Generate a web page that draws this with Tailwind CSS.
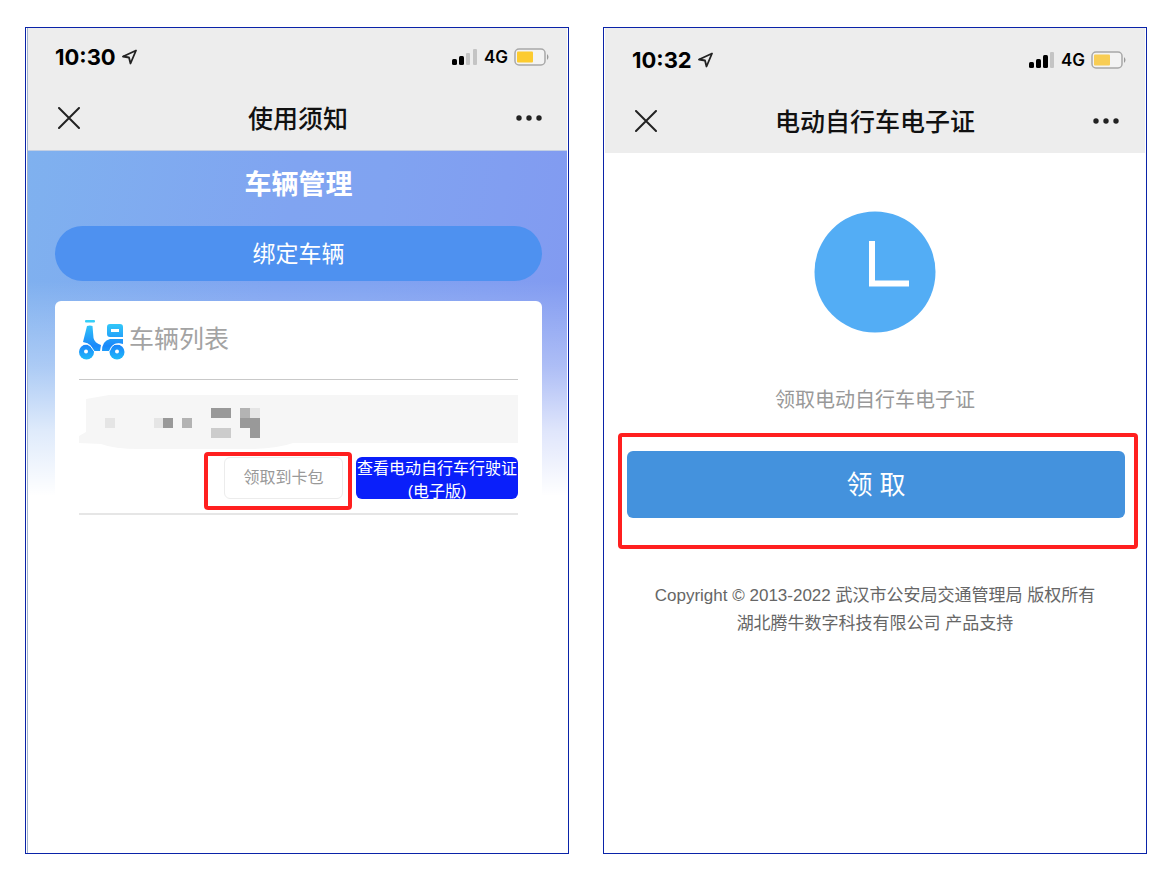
<!DOCTYPE html>
<html lang="zh-CN">
<head>
    <meta charset="UTF-8">
    <meta name="viewport" content="width=device-width, initial-scale=1.0">
    <title>电动自行车电子证</title>
    <script src="https://cdn.jsdelivr.net/npm/@tailwindcss/browser@4"></script>
</head>
<body class="min-h-screen bg-white font-['Liberation_Sans','Noto_Sans_CJK_SC',sans-serif]">
    <main class="min-h-screen grid grid-cols-2 gap-[34px] px-[25px] pt-[27px] pb-9">

        <!-- Vehicle management -->
        <section class="border border-[#0a23a8] pl-px pr-px">
            <div class="h-full border-l border-[#a3b3cc]">
                <header class="bg-[#ededed] border-b border-[#c3cfe3]">
                    <div class="h-[58px] pl-[27px] pr-[17px] flex items-center justify-between font-['Inter',sans-serif] text-black">
                        <div class="flex items-center gap-[6px]">
                            <span class="text-[22px] font-bold">10:30</span>
                            <svg class="w-4 h-4" viewBox="0 0 16 16" fill="none" stroke="#222" stroke-width="1.8" stroke-linejoin="round">
                                <path d="M14 1.5L1 7.5L7 8.5L8.500 14.5Z"></path>
                            </svg>
                        </div>
                        <div class="flex items-center gap-[6px]">
                            <svg class="w-[26px] h-4" viewBox="0 0 26 16">
                                <rect x="0" y="10" width="5" height="6" rx="1.5" fill="#000"></rect>
                                <rect x="7" y="7" width="5" height="9" rx="1.5" fill="#000"></rect>
                                <rect x="14" y="4" width="4" height="12" rx="1" fill="#c4c4c4"></rect>
                                <rect x="21" y="0" width="4" height="16" rx="1" fill="#c4c4c4"></rect>
                            </svg>
                            <span class="pt-[2px] text-[17px] font-semibold">4G</span>
                            <svg class="w-9 h-[18px]" viewBox="0 0 36 18">
                                <rect x="1" y="1" width="30" height="16" rx="4" fill="#f3f3f3" stroke="#a8a8a8" stroke-width="1.5"></rect>
                                <rect x="3" y="3.500" width="16" height="11" rx="1" fill="#fccb2f"></rect>
                                <path d="M33 6Q36 9 33 12Z" fill="#999"></path>
                            </svg>
                        </div>
                    </div>
                    <div class="h-16 pl-[30px] pr-[17px] grid grid-cols-[30px_1fr_42px] items-center text-[#111]">
                        <button type="button" class="text-left" aria-label="关闭">
                            <svg class="w-[22px] h-[22px]" viewBox="0 0 22 22" fill="none" stroke="#222" stroke-width="2" stroke-linecap="round">
                                <path d="M1 1L21 21M21 1L1 21"></path>
                            </svg>
                        </button>
                        <h1 class="pt-1 text-center text-[25px] font-medium">使用须知</h1>
                        <button type="button" class="flex justify-center" aria-label="更多">
                            <svg class="w-[26px] h-[6px]" viewBox="0 0 26 6" fill="#222">
                                <circle cx="3" cy="3" r="2.700"></circle>
                                <circle cx="13" cy="3" r="2.700"></circle>
                                <circle cx="23" cy="3" r="2.700"></circle>
                            </svg>
                        </button>
                    </div>
                </header>

                <div class="pt-4 pl-[27px] pr-[25px] bg-[linear-gradient(to_bottom,#ffffff00_130px,#ffffff59_215px,#ffffffbf_280px,#ffffff_345px),linear-gradient(100deg,#7fb1ef_0%,#80a4f1_45%,#80a3f1_60%,#8299f1_100%)]">
                    <h2 class="text-center text-[27px] leading-9 font-bold text-white">车辆管理</h2>
                    <button type="button" class="mt-[23px] w-full h-[55px] rounded-full bg-[#4e91f0] pt-[2px] text-[23px] text-white">绑定车辆</button>

                    <div class="mt-5 px-6 pt-4 bg-white rounded-md">
                        <div class="h-[63px] pb-4 flex items-center gap-1 border-b border-[#c9c9c9]">
                            <svg class="w-[46px] h-10" viewBox="0 0 46 40">
                                <defs>
                                    <linearGradient id="scooter" gradientUnits="userSpaceOnUse" x1="0" y1="0" x2="0" y2="40">
                                        <stop offset="0" stop-color="#36d3f8"></stop>
                                        <stop offset="0.650" stop-color="#1b88fa"></stop>
                                        <stop offset="1" stop-color="#20bdf9"></stop>
                                    </linearGradient>
                                </defs>
                                <g fill="url(#scooter)">
                                    <rect x="6" y="0" width="10" height="2.500" rx="1"></rect>
                                    <path d="M8 6Q11 5 13.500 6L14.500 18Q15.500 23 22 25L21 31H14Q14 24 4 22Z"></path>
                                    <path fill-rule="evenodd" d="M31 4H41Q44 4 44 7V17H31Q28 17 28 14V7Q28 4 31 4ZM32 9V12H40V9Z"></path>
                                    <path d="M31 19H44V24Q34 21 31 31H23Q23 21 31 19Z"></path>
                                    <circle cx="7.500" cy="32" r="7.500"></circle>
                                    <circle cx="38" cy="32" r="7.500"></circle>
                                </g>
                                <path d="M0 25.500Q9 20 15 31M30.500 31Q34 20 45 26" fill="none" stroke="#fff" stroke-width="1"></path>
                                <circle cx="7" cy="31.500" r="2" fill="#fff"></circle>
                                <circle cx="38" cy="31.500" r="2" fill="#fff"></circle>
                            </svg>
                            <h3 class="text-[25px] text-[#a3a3a3]">车辆列表</h3>
                        </div>

                        <!-- Masked plate number -->
                        <svg class="block w-full h-[54px] mt-[15px]" viewBox="0 0 439 54" preserveAspectRatio="xMinYMin slice" role="img" aria-label="车牌号">
                            <path d="M7 4L30 0H439V48H214Q200 53 175 54H60Q35 54 22 49L0 48V41L7 37Z" fill="#f6f6f6"></path>
                            <path d="M26 23h10v10h-10zM75 23h10v10h-10zM171 13h10v10h-10z" fill="#e5e5e5"></path>
                            <path d="M84 23h10v10h-10zM132 13h20v10h-20zM161 23h20v20h-10v-10h-10z" fill="#999"></path>
                            <path d="M103 23h10v10h-10zM161 13h10v10h-10z" fill="#b3b3b3"></path>
                            <path d="M132 33h20v10h-20z" fill="#ccc"></path>
                        </svg>

                        <div class="mt-[3px] pb-[3px] flex items-start justify-end gap-1 border-b-2 border-[#e6e6e6]">
                            <div class="h-[58px] border-4 border-[#ff1f1f] rounded-sm pt-px pl-4 pr-[5px]">
                                <button type="button" class="block w-[119px] h-[42px] rounded-md border border-[#ececec] text-[16px] text-[#999]">领取到卡包</button>
                            </div>
                            <button type="button" class="mt-[5px] w-[162px] h-[42px] rounded-md overflow-hidden flex items-start justify-center whitespace-nowrap bg-[#0a1ffa] text-[16px] leading-[23px] text-white">查看电动自行车行驶证<br>(电子版)</button>
                        </div>
                    </div>
                </div>
            </div>
        </section>

        <!-- Electronic certificate -->
        <section class="border border-[#0a23a8] pl-px pr-px">
            <header class="pt-[3px] bg-[#ededed]">
                <div class="h-[58px] pl-[27px] pr-[18px] flex items-center justify-between font-['Inter',sans-serif] text-black">
                    <div class="flex items-center gap-[6px]">
                        <span class="text-[22px] font-bold">10:32</span>
                        <svg class="w-4 h-4" viewBox="0 0 16 16" fill="none" stroke="#222" stroke-width="1.8" stroke-linejoin="round">
                            <path d="M14 1.5L1 7.5L7 8.5L8.500 14.5Z"></path>
                        </svg>
                    </div>
                    <div class="flex items-center gap-[6px]">
                        <svg class="w-[26px] h-4" viewBox="0 0 26 16">
                            <rect x="0" y="10" width="5" height="6" rx="1.5" fill="#000"></rect>
                            <rect x="7" y="7" width="5" height="9" rx="1.5" fill="#000"></rect>
                            <rect x="14" y="3" width="5" height="13" rx="1.5" fill="#000"></rect>
                            <rect x="21" y="0" width="4" height="16" rx="1" fill="#c4c4c4"></rect>
                        </svg>
                        <span class="pt-[2px] text-[17px] font-semibold">4G</span>
                        <svg class="w-9 h-[18px]" viewBox="0 0 36 18">
                            <rect x="1" y="1" width="30" height="16" rx="4" fill="#f3f3f3" stroke="#a8a8a8" stroke-width="1.5"></rect>
                            <rect x="3" y="3.500" width="16" height="11" rx="1" fill="#f8cd54"></rect>
                            <path d="M33 6Q36 9 33 12Z" fill="#999"></path>
                        </svg>
                    </div>
                </div>
                <div class="h-16 pl-[30px] pr-[18px] grid grid-cols-[30px_1fr_42px] items-center text-[#111]">
                    <button type="button" class="text-left" aria-label="关闭">
                        <svg class="w-[22px] h-[22px]" viewBox="0 0 22 22" fill="none" stroke="#222" stroke-width="2" stroke-linecap="round">
                            <path d="M1 1L21 21M21 1L1 21"></path>
                        </svg>
                    </button>
                    <h1 class="pt-1 text-center text-[25px] font-medium">电动自行车电子证</h1>
                    <button type="button" class="flex justify-center" aria-label="更多">
                        <svg class="w-[26px] h-[6px]" viewBox="0 0 26 6" fill="#222">
                            <circle cx="3" cy="3" r="2.700"></circle>
                            <circle cx="13" cy="3" r="2.700"></circle>
                            <circle cx="23" cy="3" r="2.700"></circle>
                        </svg>
                    </button>
                </div>
            </header>

            <div class="pt-[58px] text-center">
                <svg class="mx-auto w-[122px] h-[122px]" viewBox="0 0 122 122">
                    <circle cx="61" cy="61" r="60.500" fill="#53adf5"></circle>
                    <path d="M58 30V72.500H95" fill="none" stroke="#fff" stroke-width="6"></path>
                </svg>
                <p class="mt-[51px] text-[20px] leading-8 text-[#999]">领取电动自行车电子证</p>
                <div class="mt-[17px] ml-[13px] mr-[7px] border-4 border-[#ff1f1f] rounded-sm pt-[14px] pb-[27px] pl-[5px] pr-[9px]">
                    <button type="button" class="block w-full h-[67px] rounded-md bg-[#4492dd] pt-[2px] text-[26px] text-white">领 取</button>
                </div>
                <p class="mt-[33px] text-[17px] leading-7 text-[#666]">
                    Copyright © 2013-2022 武汉市公安局交通管理局 版权所有<br>
                    湖北腾牛数字科技有限公司 产品支持
                </p>
            </div>
        </section>
    </main>
</body>
</html>
